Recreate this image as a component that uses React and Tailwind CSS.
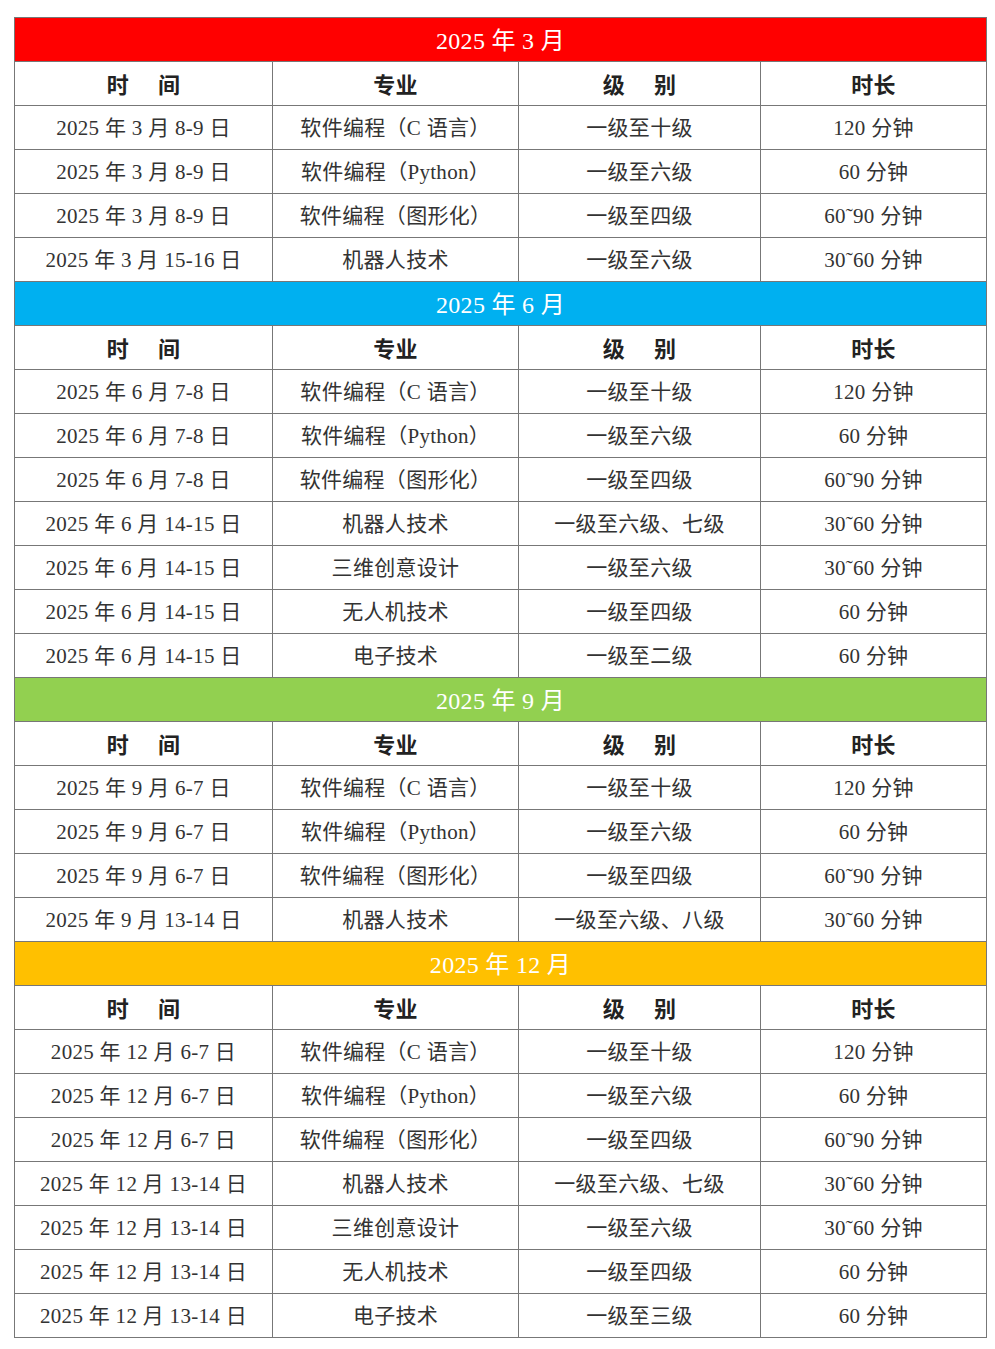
import React from "react";

const groups = [
  {
    title: "2025 年 3 月",
    color: "bg-[#ff0000]",
    rows: [
      ["2025 年 3 月 8-9 日", "软件编程（C 语言）", "一级至十级", "120 分钟"],
      ["2025 年 3 月 8-9 日", "软件编程（Python）", "一级至六级", "60 分钟"],
      ["2025 年 3 月 8-9 日", "软件编程（图形化）", "一级至四级", "60˜90 分钟"],
      ["2025 年 3 月 15-16 日", "机器人技术", "一级至六级", "30˜60 分钟"],
    ],
  },
  {
    title: "2025 年 6 月",
    color: "bg-[#00b0f0]",
    rows: [
      ["2025 年 6 月 7-8 日", "软件编程（C 语言）", "一级至十级", "120 分钟"],
      ["2025 年 6 月 7-8 日", "软件编程（Python）", "一级至六级", "60 分钟"],
      ["2025 年 6 月 7-8 日", "软件编程（图形化）", "一级至四级", "60˜90 分钟"],
      ["2025 年 6 月 14-15 日", "机器人技术", "一级至六级、七级", "30˜60 分钟"],
      ["2025 年 6 月 14-15 日", "三维创意设计", "一级至六级", "30˜60 分钟"],
      ["2025 年 6 月 14-15 日", "无人机技术", "一级至四级", "60 分钟"],
      ["2025 年 6 月 14-15 日", "电子技术", "一级至二级", "60 分钟"],
    ],
  },
  {
    title: "2025 年 9 月",
    color: "bg-[#92d050]",
    rows: [
      ["2025 年 9 月 6-7 日", "软件编程（C 语言）", "一级至十级", "120 分钟"],
      ["2025 年 9 月 6-7 日", "软件编程（Python）", "一级至六级", "60 分钟"],
      ["2025 年 9 月 6-7 日", "软件编程（图形化）", "一级至四级", "60˜90 分钟"],
      ["2025 年 9 月 13-14 日", "机器人技术", "一级至六级、八级", "30˜60 分钟"],
    ],
  },
  {
    title: "2025 年 12 月",
    color: "bg-[#ffc000]",
    rows: [
      ["2025 年 12 月 6-7 日", "软件编程（C 语言）", "一级至十级", "120 分钟"],
      ["2025 年 12 月 6-7 日", "软件编程（Python）", "一级至六级", "60 分钟"],
      ["2025 年 12 月 6-7 日", "软件编程（图形化）", "一级至四级", "60˜90 分钟"],
      ["2025 年 12 月 13-14 日", "机器人技术", "一级至六级、七级", "30˜60 分钟"],
      ["2025 年 12 月 13-14 日", "三维创意设计", "一级至六级", "30˜60 分钟"],
      ["2025 年 12 月 13-14 日", "无人机技术", "一级至四级", "60 分钟"],
      ["2025 年 12 月 13-14 日", "电子技术", "一级至三级", "60 分钟"],
    ],
  },
];

const cell = "border border-[#777] h-[44px] p-0 pt-[3px] text-center align-middle";

export default function App() {
  return (
    <div
      className="w-[995px] min-h-[1349px] bg-white pt-[17px] pl-[14px]"
      style={{ fontFamily: '"Liberation Serif", "Noto Sans CJK SC", serif' }}
    >
      <table className="border-collapse w-[972px] table-fixed text-[21px] text-[#333] tracking-[0.3px]">
        <colgroup>
          <col className="w-[258px]" />
          <col className="w-[246px]" />
          <col className="w-[242px]" />
          <col className="w-[226px]" />
        </colgroup>
        <tbody>
          {groups.map((g) => (
            <React.Fragment key={g.title}>
              <tr>
                <td colSpan={4} className={`${cell} ${g.color} text-white text-[24px]`}>
                  {g.title}
                </td>
              </tr>
              <tr className="font-bold text-[#222] text-[22px]">
                <td className={cell}>时&nbsp;&nbsp;&nbsp;&nbsp;&nbsp;间</td>
                <td className={cell}>专业</td>
                <td className={cell}>级&nbsp;&nbsp;&nbsp;&nbsp;&nbsp;别</td>
                <td className={cell}>时长</td>
              </tr>
              {g.rows.map((r, i) => (
                <tr key={i}>
                  {r.map((c, j) => (
                    <td key={j} className={cell}>
                      {c}
                    </td>
                  ))}
                </tr>
              ))}
            </React.Fragment>
          ))}
        </tbody>
      </table>
    </div>
  );
}
